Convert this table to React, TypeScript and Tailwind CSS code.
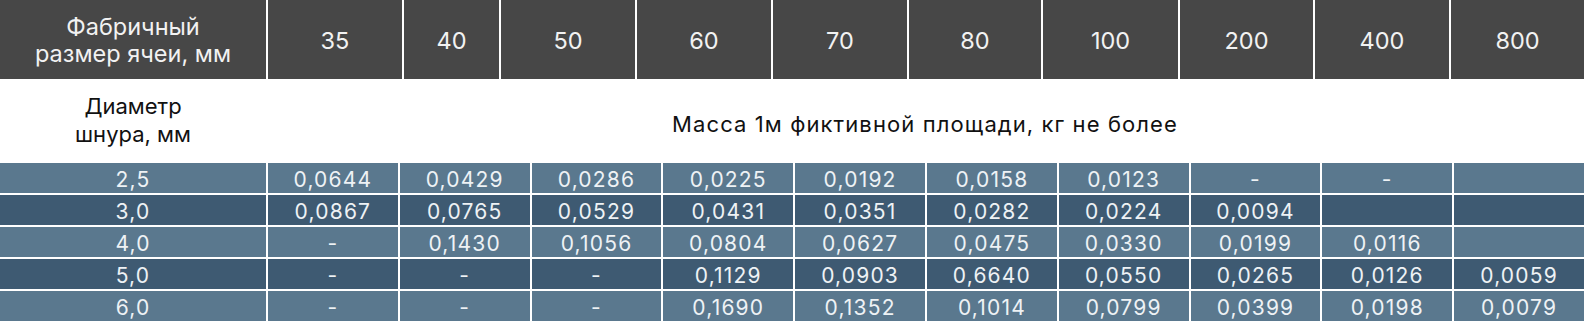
const sizes = ["35", "40", "50", "60", "70", "80", "100", "200", "400", "800"];

const rows: { d: string; v: string[] }[] = [
  { d: "2,5", v: ["0,0644", "0,0429", "0,0286", "0,0225", "0,0192", "0,0158", "0,0123", "-", "-", ""] },
  { d: "3,0", v: ["0,0867", "0,0765", "0,0529", "0,0431", "0,0351", "0,0282", "0,0224", "0,0094", "", ""] },
  { d: "4,0", v: ["-", "0,1430", "0,1056", "0,0804", "0,0627", "0,0475", "0,0330", "0,0199", "0,0116", ""] },
  { d: "5,0", v: ["-", "-", "-", "0,1129", "0,0903", "0,6640", "0,0550", "0,0265", "0,0126", "0,0059"] },
  { d: "6,0", v: ["-", "-", "-", "0,1690", "0,1352", "0,1014", "0,0799", "0,0399", "0,0198", "0,0079"] },
];

export default function App() {
  return (
    <div
      className="w-[1584px] h-[322px] overflow-hidden bg-white"
      style={{ fontFamily: "Inter, 'Noto Sans', sans-serif" }}
    >
      {/* шапка */}
      <div className="grid h-[79px] grid-cols-[266px_134px_95px_134px_134px_134px_132px_135px_133px_134px_1fr] gap-x-[2px] bg-white text-[23.5px] text-[#f2f2f2]">
        <div className="flex flex-col items-center justify-center bg-[#474747] text-center leading-[27px]">
          <span>Фабричный</span>
          <span>размер ячеи, мм</span>
        </div>
        {sizes.map((s) => (
          <div key={s} className="flex items-center justify-center bg-[#474747] pt-[2px]">
            {s}
          </div>
        ))}
      </div>

      {/* подпись */}
      <div className="grid h-[84px] grid-cols-[266px_1fr] text-[22px] text-[#111]">
        <div className="flex flex-col items-center justify-center pb-[2px] text-center leading-[28px]">
          <span>Диаметр</span>
          <span>шнура, мм</span>
        </div>
        <div className="flex items-center justify-center pt-[6px] tracking-[1.1px]">
          Масса 1м фиктивной площади, кг не более
        </div>
      </div>

      {/* данные */}
      <div className="flex flex-col gap-y-[2px] bg-white">
        {rows.map((r, i) => (
          <div
            key={r.d}
            className="grid h-[30px] shrink-0 grid-cols-[266px_repeat(10,1fr)] gap-x-[2px] bg-white text-[21px] leading-none tracking-[1.2px] text-[#eef2f5]"
          >
            <div className={`flex items-center justify-center pt-[2px] ${i % 2 ? "bg-[#3e5a72]" : "bg-[#5a788e]"}`}>
              {r.d}
            </div>
            {r.v.map((v, j) => (
              <div
                key={j}
                className={`flex items-center justify-center pt-[2px] ${i % 2 ? "bg-[#3e5a72]" : "bg-[#5a788e]"}`}
              >
                {v}
              </div>
            ))}
          </div>
        ))}
      </div>
    </div>
  );
}
